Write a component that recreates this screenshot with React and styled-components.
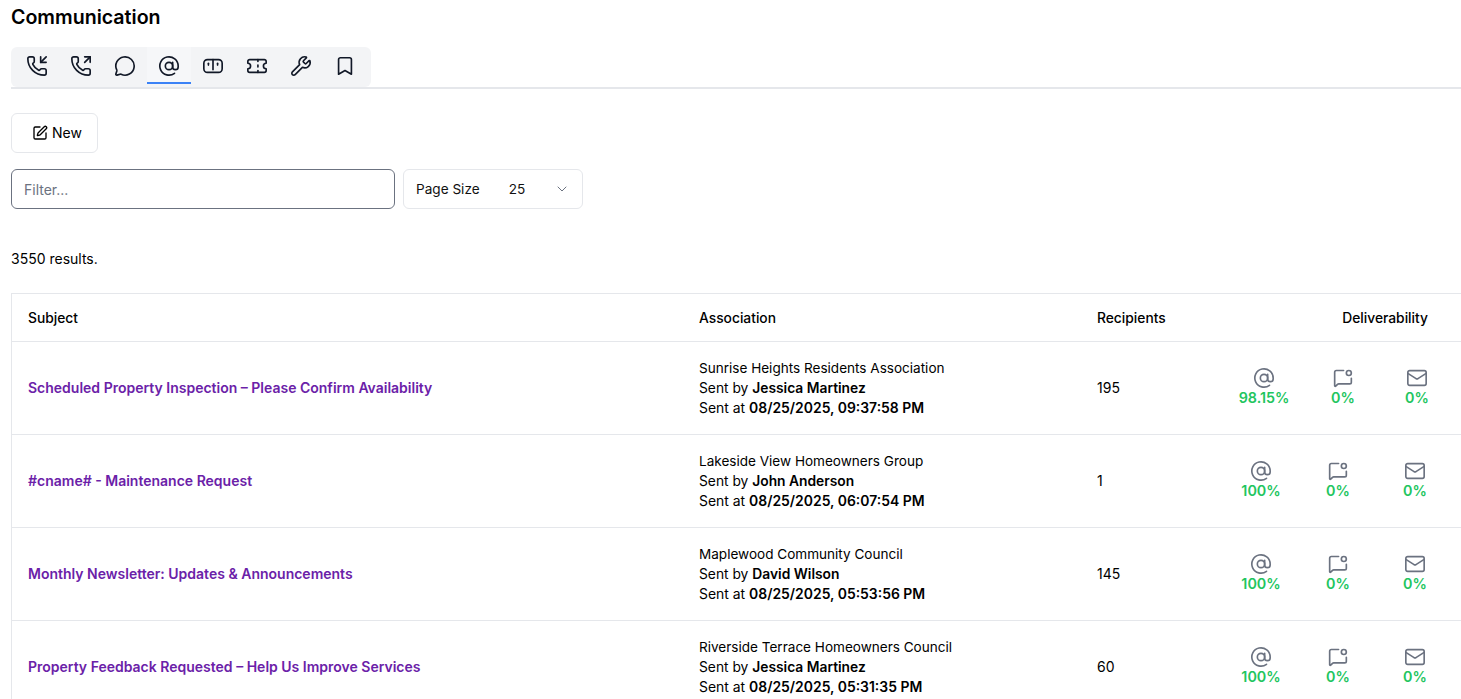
import React from "react";
import styled, { createGlobalStyle } from "styled-components";
import {
  PhoneIncoming,
  PhoneOutgoing,
  MessageCircle,
  AtSign,
  Ticket,
  Wrench,
  Bookmark,
  SquarePen,
  ChevronDown,
  MessageSquareDot,
  Mail,
} from "lucide-react";

const GlobalStyle = createGlobalStyle`
  html, body {
    margin: 0;
    padding: 0;
    background: #fff;
    overflow: hidden;
  }
  body {
    font-family: Inter, "Liberation Sans", sans-serif;
    color: #000;
  }
`;

const rows = [
  {
    subject: "Scheduled Property Inspection – Please Confirm Availability",
    association: "Sunrise Heights Residents Association",
    sender: "Jessica Martinez",
    sentAt: "08/25/2025, 09:37:58 PM",
    recipients: "195",
    rate: "98.15%",
    wide: true,
  },
  {
    subject: "#cname# - Maintenance Request",
    association: "Lakeside View Homeowners Group",
    sender: "John Anderson",
    sentAt: "08/25/2025, 06:07:54 PM",
    recipients: "1",
    rate: "100%",
  },
  {
    subject: "Monthly Newsletter: Updates & Announcements",
    association: "Maplewood Community Council",
    sender: "David Wilson",
    sentAt: "08/25/2025, 05:53:56 PM",
    recipients: "145",
    rate: "100%",
  },
  {
    subject: "Property Feedback Requested – Help Us Improve Services",
    association: "Riverside Terrace Homeowners Council",
    sender: "Jessica Martinez",
    sentAt: "08/25/2025, 05:31:35 PM",
    recipients: "60",
    rate: "100%",
  },
];

const MailboxIcon = ({ size = 22, strokeWidth = 2 }) => (
  <svg width={size} height={size} viewBox="0 0 24 24" fill="none" stroke="currentColor" strokeWidth={strokeWidth} strokeLinecap="round" strokeLinejoin="round">
    <rect x="2" y="5" width="20" height="14" rx="4" />
    <path d="M12 5v11" />
    <path d="M7 9v2" />
    <path d="M17 9v2" />
  </svg>
);

const tabs = [PhoneIncoming, PhoneOutgoing, MessageCircle, AtSign, MailboxIcon, Ticket, Wrench, Bookmark];

export default function App() {
  return (
    <Page>
      <GlobalStyle />
      <Title>Communication</Title>
      <TabRow>
        <TabList>
          {tabs.map((Icon, i) => (
            <Tab key={i} $active={i === 3}>
              <Icon size={22} strokeWidth={1.8} />
            </Tab>
          ))}
        </TabList>
      </TabRow>
      <NewButton>
        <SquarePen size={16} strokeWidth={2} />
        New
      </NewButton>
      <Controls>
        <FilterInput placeholder="Filter..." />
        <PageSize>
          <span>Page Size</span>
          <PageValue>25</PageValue>
          <ChevronDown size={16} color="#6b7280" strokeWidth={1.5} />
        </PageSize>
      </Controls>
      <Results>3550 results.</Results>
      <TableWrap>
        <Table>
          <colgroup>
            <col style={{ width: 671 }} />
            <col style={{ width: 398 }} />
            <col style={{ width: 140 }} />
            <col />
          </colgroup>
          <thead>
            <tr>
              <Th>Subject</Th>
              <Th>Association</Th>
              <Th>Recipients</Th>
              <Th $right>Deliverability</Th>
            </tr>
          </thead>
          <tbody>
            {rows.map((row) => (
              <tr key={row.subject}>
                <Td>
                  <SubjectLink>{row.subject}</SubjectLink>
                </Td>
                <Td>
                  <AssociationName>{row.association}</AssociationName>
                  <SentBy>Sent by <strong>{row.sender}</strong></SentBy>
                  <SentAt>Sent at <strong>{row.sentAt}</strong></SentAt>
                </Td>
                <Td>{row.recipients}</Td>
                <StatsCell>
                  <Stats $wide={row.wide}>
                    <Stat>
                      <AtSign size={22} strokeWidth={1.8} />
                      <Rate>{row.rate}</Rate>
                    </Stat>
                    <Stat>
                      <MessageSquareDot size={20} strokeWidth={2} />
                      <Rate>0%</Rate>
                    </Stat>
                    <Stat>
                      <Mail size={22} strokeWidth={1.8} />
                      <Rate>0%</Rate>
                    </Stat>
                  </Stats>
                </StatsCell>
              </tr>
            ))}
          </tbody>
        </Table>
      </TableWrap>
    </Page>
  );
}

const Page = styled.div`
  padding: 6px 0 0 11px;
  height: 693px;
  overflow: hidden;
  font-size: 14px;
  line-height: 20px;
`;

const Title = styled.h1`
  margin: 0;
  font-size: 19.6px;
  line-height: 22px;
  font-weight: 600;
  color: #000;
`;

const TabRow = styled.div`
  margin-top: 19px;
  border-bottom: 2px solid #e5e7eb;
  height: 40px;
`;

const TabList = styled.div`
  display: inline-flex;
  padding: 0 4px;
  height: 40px;
  background: #f3f4f6;
  border-radius: 6px;
`;

const Tab = styled.div`
  box-sizing: border-box;
  width: 44px;
  height: 37px;
  padding-top: 3px;
  display: flex;
  align-items: center;
  justify-content: center;
  color: #111827;
  border-bottom: 2px solid ${(p) => (p.$active ? "#3b82f6" : "transparent")};
  background: ${(p) => (p.$active ? "#f6f7f9" : "transparent")};
`;

const NewButton = styled.button`
  display: flex;
  align-items: center;
  gap: 4px;
  margin-top: 24px;
  width: 87px;
  height: 40px;
  padding: 0 0 0 20px;
  background: #fff;
  border: 1px solid #e5e7eb;
  border-radius: 6px;
  font: inherit;
  color: #000;
`;

const Controls = styled.div`
  display: flex;
  gap: 8px;
  margin-top: 16px;
`;

const FilterInput = styled.input`
  width: 384px;
  height: 40px;
  box-sizing: border-box;
  padding: 0 12px;
  border: 1px solid #6b7280;
  border-radius: 6px;
  font: inherit;
  outline: none;
  &::placeholder {
    color: #6b7280;
  }
`;

const PageSize = styled.div`
  width: 180px;
  height: 40px;
  box-sizing: border-box;
  display: flex;
  align-items: center;
  padding: 0 12px;
  border: 1px solid #e5e7eb;
  border-radius: 6px;
  color: #111;
  font-size: 13.6px;
`;

const PageValue = styled.span`
  margin-left: 29px;
  flex: 1;
`;

const Results = styled.div`
  margin-top: 40px;
`;

const TableWrap = styled.div`
  margin-top: 24px;
  border: 1px solid #e5e7eb;
  border-right: none;
  border-bottom: none;
`;

const Table = styled.table`
  width: 100%;
  border-collapse: collapse;
  table-layout: fixed;
`;

const Th = styled.th`
  height: 47px;
  padding: 0 33px 0 16px;
  text-align: ${(p) => (p.$right ? "right" : "left")};
  font-weight: 500;
  font-size: 13.8px;
  border-bottom: 1px solid #e5e7eb;
`;

const Td = styled.td`
  height: 92px;
  padding: 0 0 0 16px;
  border-bottom: 1px solid #e5e7eb;
  vertical-align: middle;
`;

const StatsCell = styled(Td)`
  padding: 0;
`;

const SubjectLink = styled.a`
  color: #6b21a8;
  font-weight: 600;
`;

const AssociationName = styled.div`
  font-size: 13.55px;
`;

const SentBy = styled.div`
  font-size: 13.8px;
  strong {
    font-weight: 600;
  }
`;

const SentAt = styled(SentBy)`
  font-size: 13.93px;
`;

const Stats = styled.div`
  display: grid;
  grid-template-columns: ${(p) => (p.$wide ? "86px 72px 76px" : "80px 74px 80px")};
`;

const Stat = styled.div`
  display: grid;
  grid-template-rows: 20px 20px;
  justify-items: center;
  align-items: center;
  color: #6b7280;
  svg {
    display: block;
  }
`;

const Rate = styled.span`
  color: #22c55e;
  font-weight: 600;
  font-size: 14.3px;
`;
